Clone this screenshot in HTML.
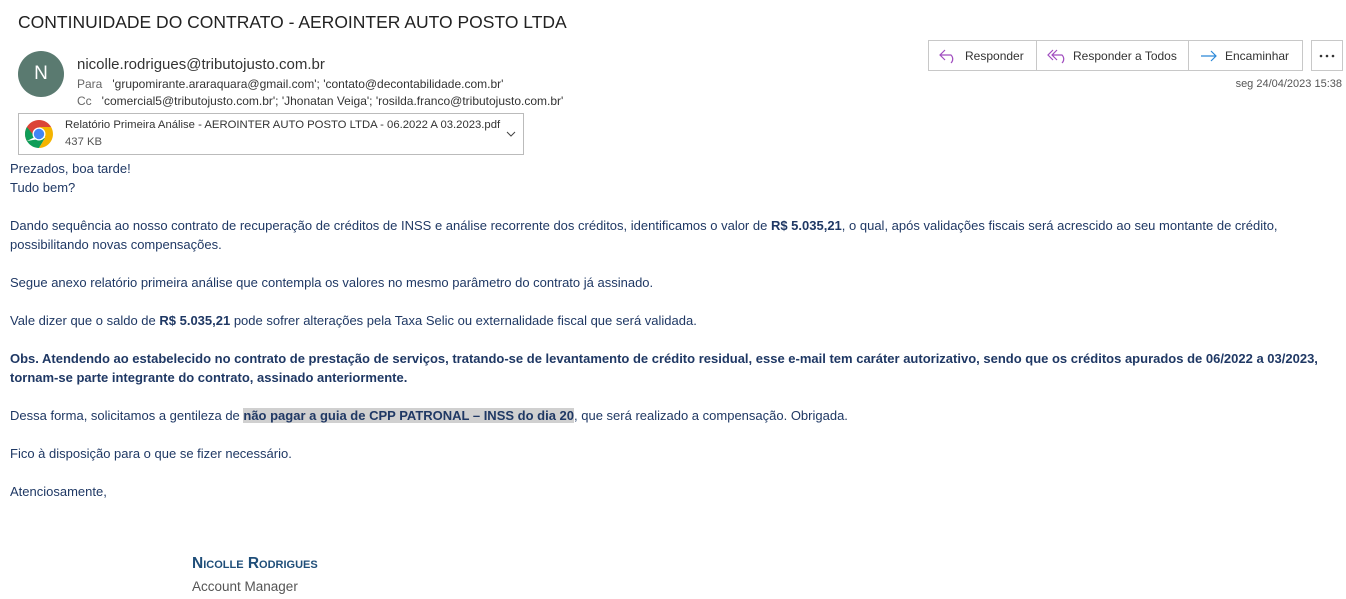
<!DOCTYPE html>
<html><head><meta charset="utf-8"><style>
body{margin:0;width:1346px;height:599px;overflow:hidden;background:#fff;font-family:"Liberation Sans",sans-serif;position:relative}
.a{position:absolute;white-space:nowrap}
#body{position:absolute;left:10px;top:159px;width:1330px;color:#1f3864;font-size:13px;line-height:19px}
#body p{margin:0}
.btn{position:absolute;top:40px;height:31px;border:1px solid #c8c8c8;box-sizing:border-box;font-size:12px;color:#333;display:flex;align-items:center}
</style></head><body>
<div class="a" style="left:18px;top:12px;font-size:17.5px;color:#222">CONTINUIDADE DO CONTRATO - AEROINTER AUTO POSTO LTDA</div>
<div class="a" style="left:18px;top:51px;width:46px;height:46px;border-radius:50%;background:#5a7a70;color:#fff;font-size:19px;text-align:center;line-height:46px">N</div>
<div class="a" style="left:77px;top:56px;font-size:15px;color:#333">nicolle.rodrigues@tributojusto.com.br</div>
<div class="a" style="left:77px;top:77px;font-size:12px;color:#333"><span style="color:#666">Para</span>&nbsp;&nbsp; 'grupomirante.araraquara@gmail.com'; 'contato@decontabilidade.com.br'</div>
<div class="a" style="left:77px;top:94px;font-size:12px;color:#333"><span style="color:#666">Cc</span>&nbsp;&nbsp; 'comercial5@tributojusto.com.br'; 'Jhonatan Veiga'; 'rosilda.franco@tributojusto.com.br'</div>
<div class="a" style="left:18px;top:113px;width:506px;height:42px;border:1px solid #bbb;box-sizing:border-box">
 <svg style="position:absolute;left:4px;top:4px" width="32" height="32" viewBox="0 0 32 32">
  <path d="M16 2 A14 14 0 0 0 3.9 23 L16 16 L28.1 9 A14 14 0 0 0 16 2Z" fill="#db4437"/>
  <path d="M3.9 23 A14 14 0 0 0 16 30 L22 20 Z" fill="#0f9d58"/>
  <path d="M3.9 9 A14 14 0 0 0 3.9 23 L12 19 Z" fill="#0f9d58"/>
  <path d="M16 30 A14 14 0 0 0 28.1 9 L16 9 L22 20 Z" fill="#f4b400"/>
  <circle cx="16" cy="16" r="6.5" fill="#fff"/><circle cx="16" cy="16" r="5.2" fill="#4285f4"/>
 </svg>
 <div class="a" style="left:46px;top:5px;font-size:11.3px;color:#333">Relatório Primeira Análise - AEROINTER AUTO POSTO LTDA - 06.2022 A 03.2023.pdf</div>
 <div class="a" style="left:46px;top:22px;font-size:11.3px;color:#555">437 KB</div>
 <svg style="position:absolute;left:487px;top:17px" width="10" height="7"><path d="M1 1 L5 5 L9 1" stroke="#444" fill="none"/></svg>
</div>
<div class="btn" style="left:928px;width:109px"><svg style="margin-left:10px" width="20" height="16"><path d="M6 2 L1 7 L6 12 M1 7 H12 A5.5 5.5 0 0 1 12 15" stroke="#a04cbf" fill="none" stroke-width="1.2"/></svg><span style="margin-left:6px">Responder</span></div>
<div class="btn" style="left:1036px;width:153px"><svg style="margin-left:10px" width="22" height="16"><path d="M6 2 L1 7 L6 12 M10 2 L5 7 L10 12 M5 7 H15 A5.5 5.5 0 0 1 15 15" stroke="#a04cbf" fill="none" stroke-width="1.2"/></svg><span style="margin-left:4px">Responder a Todos</span></div>
<div class="btn" style="left:1188px;width:115px"><svg style="margin-left:11px" width="18" height="14"><path d="M1 7 H16 M11 2 L16 7 L11 12" stroke="#2b88d8" fill="none" stroke-width="1.2"/></svg><span style="margin-left:7px">Encaminhar</span></div>
<div class="btn" style="left:1311px;width:32px;justify-content:center"><svg width="16" height="4"><circle cx="2" cy="2" r="1.3" fill="#333"/><circle cx="8" cy="2" r="1.3" fill="#333"/><circle cx="14" cy="2" r="1.3" fill="#333"/></svg></div>
<div class="a" style="right:4px;top:78px;font-size:11px;color:#555">seg 24/04/2023 15:38</div>
<div id="body">
<p>Prezados, boa tarde!</p><p>Tudo bem?</p><p>&nbsp;</p>
<p>Dando sequência ao nosso contrato de recuperação de créditos de INSS e análise recorrente dos créditos, identificamos o valor de <b>R$ 5.035,21</b>, o qual, após validações fiscais será acrescido ao seu montante de crédito, possibilitando novas compensações.</p><p>&nbsp;</p>
<p>Segue anexo relatório primeira análise que contempla os valores no mesmo parâmetro do contrato já assinado.</p><p>&nbsp;</p>
<p>Vale dizer que o saldo de <b>R$ 5.035,21</b> pode sofrer alterações pela Taxa Selic ou externalidade fiscal que será validada.</p><p>&nbsp;</p>
<p><b>Obs. Atendendo ao estabelecido no contrato de prestação de serviços, tratando-se de levantamento de crédito residual, esse e-mail tem caráter autorizativo, sendo que os créditos apurados de 06/2022 a 03/2023, tornam-se parte integrante do contrato, assinado anteriormente.</b></p><p>&nbsp;</p>
<p>Dessa forma, solicitamos a gentileza de <b style="background:#d0d0d0">não pagar a guia de CPP PATRONAL – INSS do dia 20</b>, que será realizado a compensação. Obrigada.</p><p>&nbsp;</p>
<p>Fico à disposição para o que se fizer necessário.</p><p>&nbsp;</p>
<p>Atenciosamente,</p>
</div>
<div class="a" style="left:192px;top:555px;font-size:15.5px;font-weight:bold;color:#1f4e79;font-variant:small-caps">Nicolle Rodrigues</div>
<div class="a" style="left:192px;top:579px;font-size:13.5px;color:#555">Account Manager</div>
</body></html>
